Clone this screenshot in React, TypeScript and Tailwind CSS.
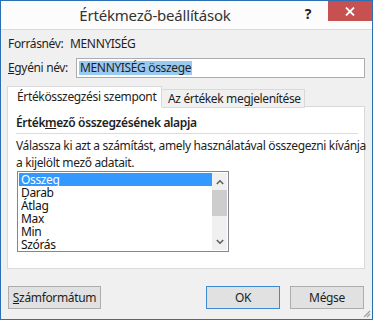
import React from "react";

const font = { fontFamily: '"Noto Sans", "Open Sans", sans-serif' };

export default function App() {
  const items = ["Összeg", "Darab", "Átlag", "Max", "Min", "Szórás"];
  return (
    <div className="w-[375px] h-[321px] bg-white" style={font}>
      <div className="w-[373px] h-[320px] border border-[#2b70b4] flex flex-col bg-[#f0f0f0] text-[12px] tracking-[-0.35px] text-[#1e1e1e] relative">
        {/* Title bar */}
        <div className="h-[29px] bg-[#fcfcfc] border-b border-[#dadada] flex items-start relative shrink-0">
          <div className="flex-1 text-center text-[15px] tracking-[-0.2px] leading-[29px] text-[#333] pl-[8px]">Értékmező-beállítások</div>
          <div className="w-[14px] mt-[4px] mr-[13px] text-[14px] font-bold leading-[18px] text-[#222] text-center">?</div>
          <div className="w-[44px] h-[20px] bg-[#c75050] flex items-center justify-center">
            <svg width="10" height="9" viewBox="0 0 10 9">
              <path d="M1 0.5 L9 8.5 M9 0.5 L1 8.5" stroke="white" strokeWidth="1.8" />
            </svg>
          </div>
        </div>
        {/* Body */}
        <div className="flex-1 flex flex-col pl-[6px] pr-[7px]">
          <div className="flex items-center h-[16px] mt-[6px] pl-[1px]">
            <span className="w-[62px]">Forrásnév:</span>
            <span>MENNYISÉG</span>
          </div>
          <div className="flex items-center mt-[6px] pl-[1px]">
            <span className="w-[68px]"><span className="underline">E</span>gyéni név:</span>
            <div className="flex-1 h-[20px] bg-white border border-[#abadb3] flex items-center pl-[2px]">
              <span className="bg-[#99c9ef] leading-[14px] px-[1px]">MENNYISÉG összege</span>
            </div>
          </div>
          {/* Tabs */}
          <div className="flex items-end mt-[8px] h-[21px] relative z-10">
            <div className="h-[21px] w-[155px] shrink-0 whitespace-nowrap bg-white border border-[#d9d9d9] border-b-0 pl-[9px] flex items-center">Értékösszegzési szempont</div>
            <div className="h-[19px] w-[143px] shrink-0 whitespace-nowrap bg-[#f0f0f0] border border-[#d9d9d9] border-l-0 pl-[6px] flex items-center mb-[-1px]">Az értékek megjelenítése</div>
          </div>
          <div className="h-[163px] bg-white border border-[#d9d9d9] mt-[-1px] pl-[8px] pr-[6px] pt-[8px] flex flex-col">
            <div className="font-semibold text-[#1e1e1e] leading-[16px] pb-[2px] border-b border-[#dcdcdc]">
              Érték<span className="underline">m</span>ező összegzésének alapja
            </div>
            <div className="mt-[3px] leading-[17px] whitespace-nowrap">
              Válassza ki azt a számítást, amely használatával összegezni kívánja
              <br />
              a kijelölt mező adatait.
            </div>
            <div className="w-[212px] h-[81px] border border-[#828790] flex p-[1px] ml-[1px]">
              <div className="flex-1 flex flex-col">
                {items.map((it, i) => (
                  <div
                    key={it}
                    className={
                      "h-[13px] leading-[13px] pl-[2px] " +
                      (i === 0 ? "bg-[#3399ff] text-white" : "text-[#111]")
                    }
                  >
                    {it}
                  </div>
                ))}
              </div>
              <div className="w-[15px] bg-[#f0f0f0] flex flex-col items-center">
                <div className="h-[17px] flex items-center justify-center">
                  <svg width="8" height="6" viewBox="0 0 8 6">
                    <path d="M0.8 5 L4 1.8 L7.2 5" stroke="#606060" strokeWidth="1.6" fill="none" />
                  </svg>
                </div>
                <div className="w-[15px] h-[26px] bg-[#cdcdcd]" />
                <div className="flex-1" />
                <div className="h-[17px] flex items-center justify-center">
                  <svg width="8" height="6" viewBox="0 0 8 6">
                    <path d="M0.8 1 L4 4.2 L7.2 1" stroke="#606060" strokeWidth="1.6" fill="none" />
                  </svg>
                </div>
              </div>
            </div>
          </div>
          {/* Buttons */}
          <div className="flex items-center mt-[17px] pl-[1px]">
            <button className="w-[93px] h-[23px] bg-[#e1e1e1] border border-[#adadad] flex items-center justify-center">
              <span><span className="underline">S</span>zámformátum</span>
            </button>
            <div className="flex-1" />
            <button className="w-[74px] h-[23px] bg-[#e1e1e1] border border-[#3c8ad2] flex items-center justify-center">OK</button>
            <button className="w-[74px] h-[23px] bg-[#e1e1e1] border border-[#adadad] flex items-center justify-center ml-[10px] mr-[1px]">Mégse</button>
          </div>
        </div>
        {/* Resize grip */}
        <svg className="absolute right-[1px] bottom-[1px]" width="8" height="8" viewBox="0 0 8 8">
          <path d="M7 1 L1 7 M7 4 L4 7" stroke="#a0a0a0" strokeWidth="1.2" />
        </svg>
      </div>
    </div>
  );
}
